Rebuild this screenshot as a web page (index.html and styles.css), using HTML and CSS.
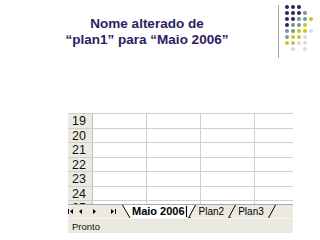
FILE: index.html
```html
<!DOCTYPE html>
<html lang="pt">
<head>
<meta charset="utf-8">
<title>Nome alterado</title>
<link rel="stylesheet" href="styles.css">
</head>
<body>
<div class="header">
  <div class="title">Nome alterado de<br>“plan1” para “Maio 2006”</div>
  <div class="divider"></div>
  <div class="dots">
    <i class="dot p"></i><i class="dot p"></i><i class="dot p"></i><i class="dot"></i><i class="dot"></i>
    <i class="dot p"></i><i class="dot p"></i><i class="dot p"></i><i class="dot t"></i><i class="dot"></i>
    <i class="dot p"></i><i class="dot p"></i><i class="dot t"></i><i class="dot t"></i><i class="dot y"></i>
    <i class="dot p"></i><i class="dot t"></i><i class="dot t"></i><i class="dot y"></i><i class="dot"></i>
    <i class="dot t"></i><i class="dot t"></i><i class="dot y"></i><i class="dot y"></i><i class="dot l"></i>
    <i class="dot t"></i><i class="dot y"></i><i class="dot y"></i><i class="dot l"></i><i class="dot"></i>
    <i class="dot y"></i><i class="dot y"></i><i class="dot l"></i><i class="dot l"></i><i class="dot"></i>
    <i class="dot"></i><i class="dot l"></i><i class="dot"></i><i class="dot l"></i><i class="dot"></i>
  </div>
</div>
<div class="sheet">
  <div class="grid">
    <div class="row"><div class="rh">19</div><div class="cell"></div><div class="cell"></div><div class="cell"></div><div class="cell last"></div></div>
    <div class="row"><div class="rh">20</div><div class="cell"></div><div class="cell"></div><div class="cell"></div><div class="cell last"></div></div>
    <div class="row"><div class="rh">21</div><div class="cell"></div><div class="cell"></div><div class="cell"></div><div class="cell last"></div></div>
    <div class="row"><div class="rh">22</div><div class="cell"></div><div class="cell"></div><div class="cell"></div><div class="cell last"></div></div>
    <div class="row"><div class="rh">23</div><div class="cell"></div><div class="cell"></div><div class="cell"></div><div class="cell last"></div></div>
    <div class="row"><div class="rh">24</div><div class="cell"></div><div class="cell"></div><div class="cell"></div><div class="cell last"></div></div>
    <div class="row"><div class="rh">25</div><div class="cell"></div><div class="cell"></div><div class="cell"></div><div class="cell last"></div></div>
  </div>
  <div class="tabs">
    <svg class="nav" width="54" height="13" viewBox="0 0 54 13">
      <rect x="0" y="4" width="1" height="5" fill="#000"/>
      <polygon points="5,4 2,6.5 5,9" fill="#000"/>
      <polygon points="14,4 11,6.5 14,9" fill="#000"/>
      <polygon points="25,4 28,6.5 25,9" fill="#000"/>
      <polygon points="43,4 46,6.5 43,9" fill="#000"/>
      <rect x="47" y="4" width="1" height="5" fill="#000"/>
    </svg>
    <div class="tab active">
      <svg class="edge" width="9" height="13" viewBox="0 0 9 13"><polygon points="0,0 9,0 9,13 8,13" fill="#fff"/><line x1="0.5" y1="0" x2="8" y2="13" stroke="#000" stroke-width="1"/></svg>
      <span class="label bold">Maio 2006</span><span class="cursor"></span>
      <svg class="edge" width="8" height="13" viewBox="0 0 8 13"><polygon points="0,0 7.5,0 0,13" fill="#fff"/><line x1="0.5" y1="13" x2="7.5" y2="0" stroke="#000" stroke-width="1"/><line x1="0.5" y1="13" x2="3" y2="13" stroke="#000" stroke-width="1"/></svg>
    </div>
    <span class="label plan2">Plan2</span>
    <svg class="edge sep" width="8" height="13" viewBox="0 0 8 13"><line x1="0.5" y1="13" x2="7.5" y2="0" stroke="#000" stroke-width="1"/><line x1="0.5" y1="13" x2="3" y2="13" stroke="#000" stroke-width="1"/></svg>
    <span class="label plan3">Plan3</span>
    <svg class="edge sep" width="8" height="13" viewBox="0 0 8 13"><line x1="0.5" y1="13" x2="7.5" y2="0" stroke="#000" stroke-width="1"/></svg>
  </div>
  <div class="status">Pronto</div>
</div>
</body>
</html>
```
FILE: styles.css
```css
html, body {
  margin: 0;
  padding: 0;
}
body {
  width: 320px;
  height: 240px;
  overflow: hidden;
  background: #fff;
  font-family: "Liberation Sans", Arial, sans-serif;
}
.header {
  display: flex;
  align-items: flex-start;
  height: 60px;
}
.title {
  width: 262px;
  padding-left: 16px;
  margin-top: 16px;
  text-align: center;
  font-weight: bold;
  font-size: 13.5px;
  line-height: 16px;
  color: #2f1b63;
}
.divider {
  width: 1px;
  height: 53px;
  margin-top: 5px;
  background: #a4a4a4;
}
.dots {
  display: grid;
  grid-template-columns: repeat(5, 6px);
  grid-auto-rows: 6px;
  margin-left: 5px;
  margin-top: 4px;
}
.dot {
  display: block;
  width: 4.6px;
  height: 4.6px;
  margin: 0.7px;
  border-radius: 50%;
}
.p { background: #36205f; }
.t { background: #6f9b9b; }
.y { background: #c8c61f; }
.l { background: #d8d7eb; }

.sheet {
  margin: 53px 0 0 68px;
  width: 225px;
}
.grid {
  height: 91px;
  overflow: hidden;
}
.row {
  display: flex;
  height: 14.5px;
  box-sizing: border-box;
  border-top: 1px solid #cfcfcf;
}
.rh {
  width: 24px;
  flex: none;
  background: #ecebe1;
  border-right: 1px solid #c4c1b0;
  font-size: 12.5px;
  line-height: 14px;
  padding-left: 4px;
  box-sizing: border-box;
  color: #111;
}
.row .rh {
  width: 25px;
}
.cell {
  width: 54px;
  flex: none;
  box-sizing: border-box;
  border-right: 1px solid #cfcfcf;
}
.cell.last {
  flex: 1;
  border-right: none;
}
.tabs {
  display: flex;
  align-items: stretch;
  height: 13px;
  background: #eceae0;
  border-top: 1px solid #a8a8a8;
  box-sizing: border-box;
  height: 14px;
}
.nav {
  flex: none;
  display: block;
}
.tab {
  display: flex;
  align-items: stretch;
}
.tab.active .label {
  background: #fff;
}
.edge {
  display: block;
  flex: none;
}
.label {
  font-size: 10px;
  line-height: 13px;
  color: #000;
  white-space: nowrap;
}
.bold {
  font-weight: bold;
  font-size: 11px;
  padding-left: 1px;
}
.cursor {
  width: 1px;
  background: #000;
  margin: 1px 1px 1px 1px;
}
.plan2 {
  margin-left: 3px;
}
.plan3 {
  margin-left: 2px;
}
.sep {
  margin-left: 4px;
}
.status {
  height: 15px;
  background: #eceae0;
  font-size: 9.5px;
  line-height: 15px;
  padding-left: 4px;
  color: #111;
  border-top: 1px solid #f8f7f2;
  box-sizing: border-box;
}
```
